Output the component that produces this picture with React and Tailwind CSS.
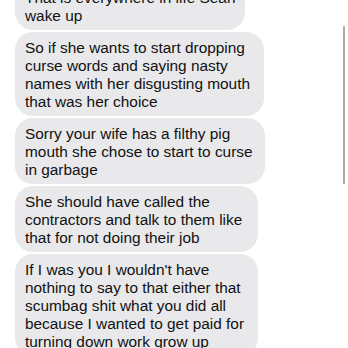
const messages = [
  { width: 'w-[230px]', lines: ['That is everywhere in life Sean', 'wake up'] },
  {
    width: 'w-[249px]',
    lines: [
      'So if she wants to start dropping',
      'curse words and saying nasty',
      'names with her disgusting mouth',
      'that was her choice',
    ],
  },
  {
    width: 'w-[250px]',
    lines: ['Sorry your wife has a filthy pig', 'mouth she chose to start to curse', 'in garbage'],
  },
  {
    width: 'w-[243px]',
    lines: ['She should have called the', 'contractors and talk to them like', 'that for not doing their job'],
  },
  {
    width: 'w-[243px]',
    lines: [
      "If I was you I wouldn't have",
      'nothing to say to that either that',
      'scumbag shit what you did all',
      'because I wanted to get paid for',
      'turning down work grow up',
    ],
  },
];

const Bubble = ({ width, lines }) => {
  return (
    <div className={`${width} rounded-[18px] bg-[#e9e9eb] pl-[10px] pr-[8px] pt-[7px] pb-[5px]`}>
      {lines.map((line, i) => (
        <div key={i} className="whitespace-nowrap text-[15.4px] leading-[18px] text-[#111111]">
          {line}
        </div>
      ))}
    </div>
  );
};

const App = () => {
  return (
    <div className="relative h-[348px] w-[348px] overflow-hidden bg-white font-['Liberation_Sans',Arial,sans-serif]">
      <div className="-mt-[18px] flex flex-col gap-[2px] pl-[15px]">
        {messages.map((m, i) => (
          <Bubble key={i} width={m.width} lines={m.lines} />
        ))}
      </div>

      {/* scroll indicator */}
      <div className="absolute right-[3px] top-[26px] h-[158px] w-[2.5px] rounded-full bg-[#a9a9a9]" />
    </div>
  );
};

export default App;
